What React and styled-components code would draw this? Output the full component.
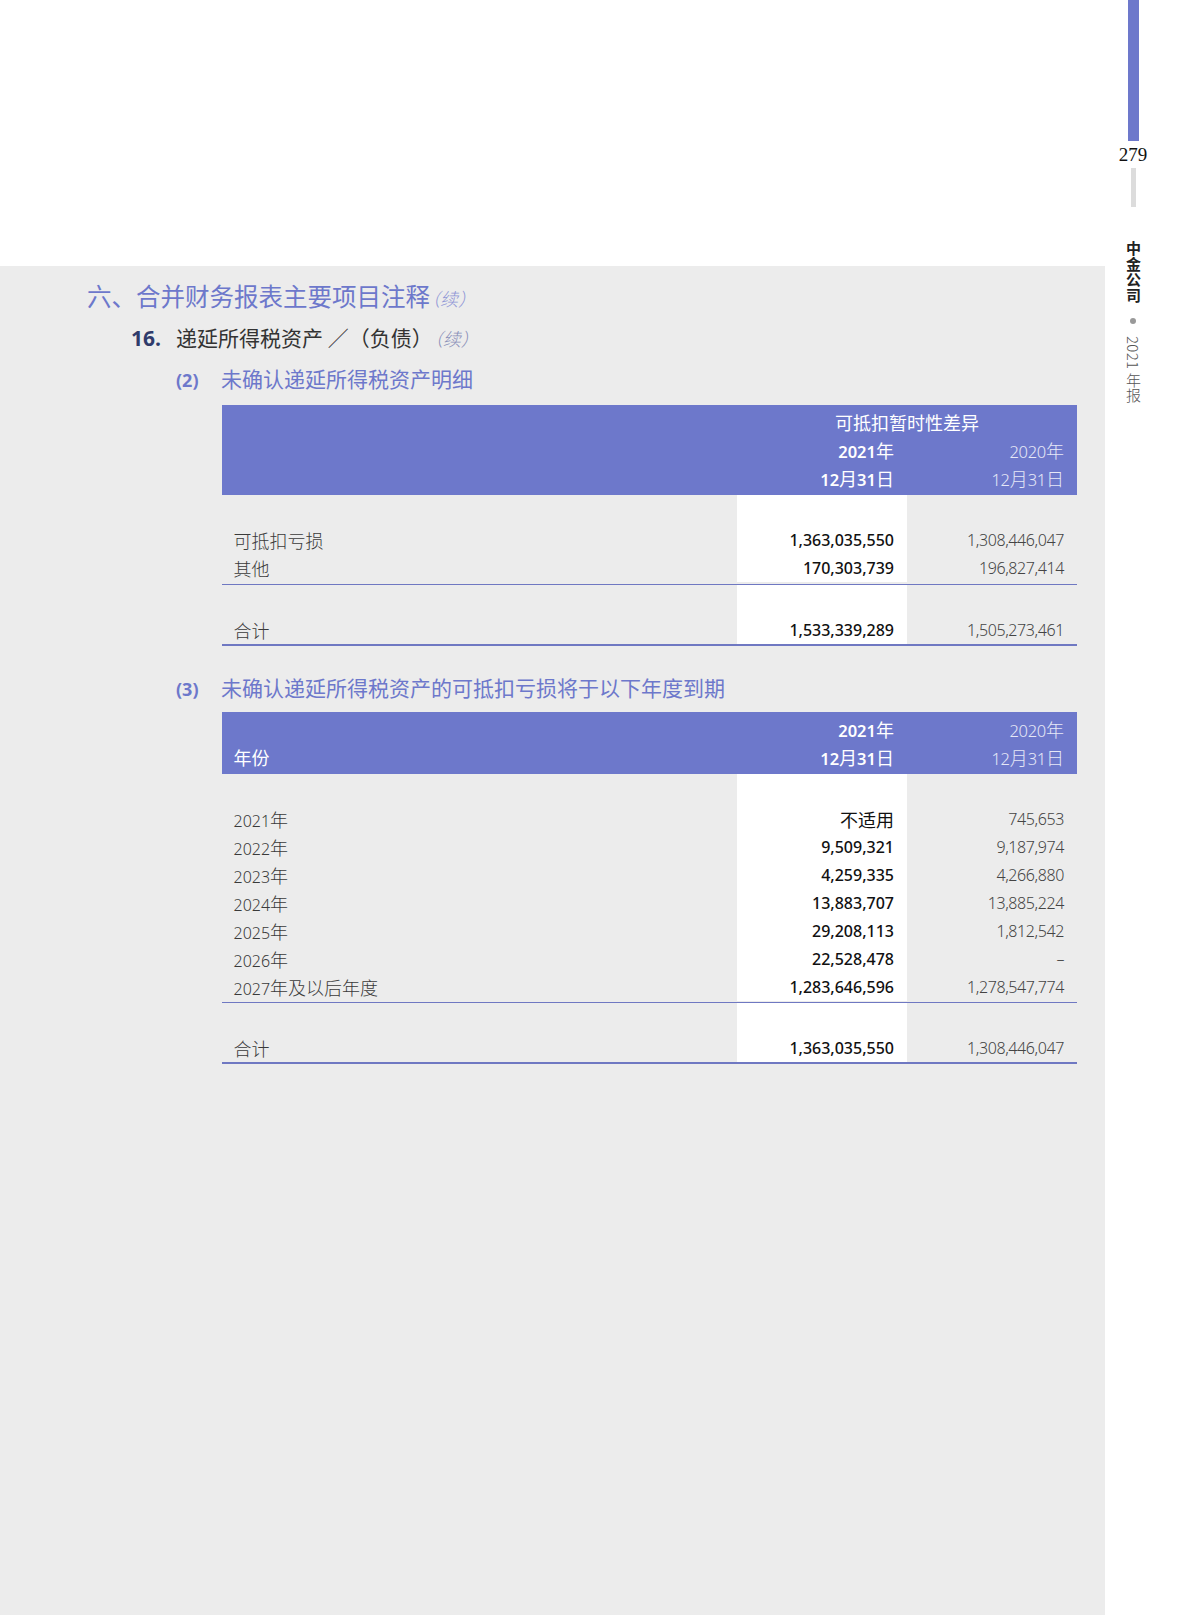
import React from 'react';
import styled, { createGlobalStyle } from 'styled-components';

const GlobalStyle = createGlobalStyle`
  html, body {
    margin: 0;
    padding: 0;
    background: #ffffff;
  }
  body {
    font-family: "Noto Sans", "Noto Sans CJK SC", sans-serif;
    color: #333;
  }
`;

const BLUE = '#6d78cb';
const LINE = '#6f78c2';

const Page = styled.div`
  width: 1190px;
  height: 1615px;
  display: flex;
  overflow: hidden;
`;

const Main = styled.div`
  width: 1105px;
  display: flex;
  flex-direction: column;
`;

const TopBlank = styled.div`
  height: 266px;
  background: #ffffff;
`;

const Panel = styled.div`
  flex: 1;
  background: #ececec;
  padding: 14px 0 0 87px;
  display: flex;
  flex-direction: column;
`;

const Side = styled.div`
  width: 56px;
  display: flex;
  flex-direction: column;
  align-items: center;
`;

const BlueBar = styled.div`
  width: 11px;
  height: 141px;
  background: ${BLUE};
`;

const PageNo = styled.div`
  font-family: "Liberation Serif", serif;
  font-size: 19px;
  line-height: 26px;
  color: #111;
  margin-top: 1px;
`;

const GreyBar = styled.div`
  width: 5px;
  height: 39px;
  background: #dcdcdc;
`;

const Vertical = styled.div`
  writing-mode: vertical-rl;
  margin-top: 34px;
  font-family: "Noto Sans CJK SC", sans-serif;
  font-size: 15px;
  line-height: 16px;
  color: #555;
  display: flex;
  align-items: center;
`;

const Brand = styled.span`
  font-weight: 700;
  color: #222;
  letter-spacing: 0.6px;
`;

const Dot = styled.span`
  display: inline-block;
  width: 6px;
  height: 6px;
  border-radius: 50%;
  background: #999;
  margin: 15px 0 12px;
`;

const Report = styled.span`
  font-weight: 300;
  color: #555;
  letter-spacing: 0.3px;
`;

const H1 = styled.div`
  font-family: "Noto Sans CJK SC", sans-serif;
  font-size: 24.5px;
  line-height: 32px;
  font-weight: 400;
  color: ${BLUE};
`;

const Cont = styled.span`
  font-style: italic;
  font-size: ${p => p.$size || 18}px;
  color: ${p => p.$color || '#8f96d6'};
  font-weight: 300;
  font-feature-settings: "halt";
  margin-left: 1px;
`;

const H2 = styled.div`
  display: flex;
  align-items: baseline;
  margin: 9px 0 0 44px;
  font-family: "Noto Sans CJK SC", sans-serif;
  font-size: 21px;
  line-height: 28px;
  color: #333;
`;

const Num = styled.span`
  width: 45px;
  flex: none;
  font-family: "Open Sans", "Noto Sans", sans-serif;
  font-weight: 700;
  color: ${p => p.$color || '#2f3b6b'};
  font-size: ${p => p.$size || 21}px;
`;

const H3 = styled.div`
  display: flex;
  align-items: baseline;
  margin: ${p => p.$top || 12}px 0 0 89px;
  font-family: "Noto Sans CJK SC", sans-serif;
  font-size: 21px;
  line-height: 28px;
  color: ${BLUE};
`;

const Table = styled.div`
  margin: ${p => p.$top || 11}px 0 0 134.5px;
  width: 855.5px;
  display: grid;
  grid-template-columns: 515.5px 170px 170px;
  font-size: 16px;
`;

const Head = styled.div`
  grid-column: 1 / -1;
  background: ${BLUE};
  padding: 3px 0;
  display: grid;
  grid-template-columns: 515.5px 170px 170px;
  color: #fff;
`;

const HCell = styled.div`
  height: 28px;
  line-height: 28px;
  padding: 0 ${p => (p.$left || p.$center ? 0 : 13)}px 0 ${p => (p.$left ? 12 : 0)}px;
  text-align: ${p => (p.$center ? 'center' : p.$left ? 'left' : 'right')};
  grid-column: ${p => p.$span || 'auto'};
  font-family: "Noto Sans", "Noto Sans CJK SC", sans-serif;
  font-weight: ${p => (p.$light ? 300 : 600)};
  color: ${p => (p.$light ? '#e6e8f7' : '#ffffff')};
  font-size: 16.5px;
  letter-spacing: ${p => (p.$light ? '-0.3px' : '0')};
  white-space: nowrap;
`;

const Cell = styled.div`
  height: ${p => p.$h || 28}px;
  line-height: ${p => p.$h || 28}px;
  background: ${p => (p.$white ? '#ffffff' : 'transparent')};
  text-align: ${p => (p.$left ? 'left' : 'right')};
  padding: 0 ${p => (p.$left ? 0 : 13)}px 0 ${p => (p.$left ? 12 : 0)}px;
  font-family: "Noto Sans", "Noto Sans CJK SC", sans-serif;
  font-size: 16px;
  font-weight: ${p => p.$weight || 400};
  color: ${p => p.$color || '#333'};
  letter-spacing: ${p => p.$ls || 0}px;
  white-space: nowrap;
`;

const Han = styled.span`
  font-family: "Noto Sans CJK SC", sans-serif;
  font-size: 18px;
  font-weight: ${p => p.$weight || 400};
  letter-spacing: 0;
`;

const Rule = styled.div`
  grid-column: 1 / -1;
  height: ${p => p.$thick || 1}px;
  background: ${LINE};
  margin-top: ${p => p.$gap || 0}px;
`;

// wrap runs of CJK characters so they get their own (larger) size
function mixed(text, weight) {
  return text.split(/([\u4e00-\u9fff]+)/).filter(Boolean).map((part, i) =>
    /[\u4e00-\u9fff]/.test(part) ? <Han key={i} $weight={weight}>{part}</Han> : part
  );
}

function Row({ label, a, b, blank }) {
  if (blank) {
    return (
      <>
        <Cell $left $h={31} />
        <Cell $white $h={31} />
        <Cell $h={31} />
      </>
    );
  }
  return (
    <>
      <Cell $left $color="#3a3a3a" $weight={300}>{mixed(label, 300)}</Cell>
      <Cell $white $weight={500} $color="#111">{mixed(a, 400)}</Cell>
      <Cell $weight={300} $color="#444" $ls={-0.4}>{b}</Cell>
    </>
  );
}

const detail = [
  ['可抵扣亏损', '1,363,035,550', '1,308,446,047'],
  ['其他', '170,303,739', '196,827,414'],
];

const expiry = [
  ['2021年', '不适用', '745,653'],
  ['2022年', '9,509,321', '9,187,974'],
  ['2023年', '4,259,335', '4,266,880'],
  ['2024年', '13,883,707', '13,885,224'],
  ['2025年', '29,208,113', '1,812,542'],
  ['2026年', '22,528,478', '–'],
  ['2027年及以后年度', '1,283,646,596', '1,278,547,774'],
];

export default function App() {
  return (
    <>
      <GlobalStyle />
      <Page>
        <Main>
          <TopBlank />
          <Panel>
            <H1>
              六、合并财务报表主要项目注释<Cont>（续）</Cont>
            </H1>
            <H2>
              <Num>16.</Num>
              <span>
                递延所得税资产 ／（负债）<Cont $color="#8a8fb8">（续）</Cont>
              </span>
            </H2>
            <H3>
              <Num $color={BLUE} $size={18}>(2)</Num>
              <span>未确认递延所得税资产明细</span>
            </H3>

            <Table>
              <Head>
                <HCell />
                <HCell $span="2 / 4" $center>{mixed('可抵扣暂时性差异', 400)}</HCell>
                <HCell />
                <HCell>{mixed('2021年', 400)}</HCell>
                <HCell $light>{mixed('2020年', 300)}</HCell>
                <HCell />
                <HCell>{mixed('12月31日', 400)}</HCell>
                <HCell $light>{mixed('12月31日', 300)}</HCell>
              </Head>
              <Row blank />
              {detail.map(r => (
                <Row key={r[0]} label={r[0]} a={r[1]} b={r[2]} />
              ))}
              <Rule $gap={2} />
              <Row blank />
              <Row label="合计" a="1,533,339,289" b="1,505,273,461" />
              <Rule $thick={2} />
            </Table>

            <H3 $top={27}>
              <Num $color={BLUE} $size={18}>(3)</Num>
              <span>未确认递延所得税资产的可抵扣亏损将于以下年度到期</span>
            </H3>

            <Table $top={9}>
              <Head>
                <HCell />
                <HCell>{mixed('2021年', 400)}</HCell>
                <HCell $light>{mixed('2020年', 300)}</HCell>
                <HCell $left>{mixed('年份', 400)}</HCell>
                <HCell>{mixed('12月31日', 400)}</HCell>
                <HCell $light>{mixed('12月31日', 300)}</HCell>
              </Head>
              <Row blank />
              {expiry.map(r => (
                <Row key={r[0]} label={r[0]} a={r[1]} b={r[2]} />
              ))}
              <Rule $gap={1} />
              <Row blank />
              <Row label="合计" a="1,363,035,550" b="1,308,446,047" />
              <Rule $thick={2} />
            </Table>
          </Panel>
        </Main>
        <Side>
          <BlueBar />
          <PageNo>279</PageNo>
          <GreyBar />
          <Vertical>
            <Brand>中金公司</Brand>
            <Dot />
            <Report>2021 年报</Report>
          </Vertical>
        </Side>
      </Page>
    </>
  );
}
